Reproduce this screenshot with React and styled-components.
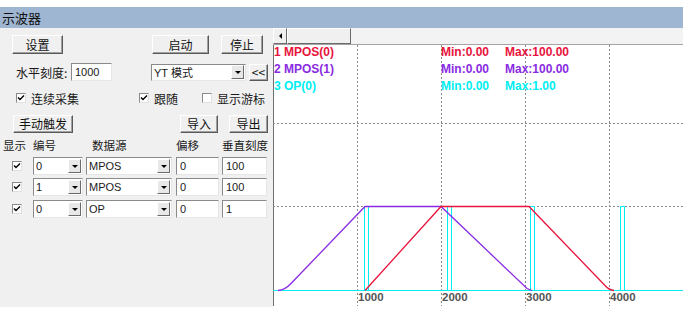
import React from 'react';
import styled, { createGlobalStyle } from 'styled-components';

const RED = '#e8143c';
const PURPLE = '#8a2be2';
const CYAN = '#00eef2';

const GlobalStyle = createGlobalStyle`
  html, body { margin: 0; padding: 0; background: #fff; }
  body {
    font-family: "Liberation Sans", "Noto Sans CJK SC", sans-serif;
    font-size: 12px;
    color: #000;
  }
`;

const Window = styled.div`
  width: 683px;
  padding-top: 7px;
`;

const TitleBar = styled.div`
  height: 21px;
  background: #9fb6d2;
  display: flex;
  align-items: center;
  padding-left: 2px;
  font-family: "Noto Sans CJK SC", sans-serif;
  font-size: 13px;
  color: #101010;
`;

const Body = styled.div`
  display: flex;
  height: 279px;
`;

const LeftPanel = styled.div`
  width: 273px;
  flex: none;
  background: #f0f0f0;
  display: flex;
  flex-direction: column;
  font-family: "Noto Sans CJK SC", sans-serif;
  font-size: 12px;
  color: #1a1a1a;
`;

const Row = styled.div`
  display: flex;
  align-items: center;
  height: ${p => p.$h}px;
  margin-top: ${p => p.$mt || 0}px;
`;

const Button = styled.div`
  box-sizing: border-box;
  width: ${p => p.$w}px;
  height: ${p => p.$h || 19}px;
  margin-left: ${p => p.$ml || 0}px;
  background: #f0f0f0;
  border: 1px solid;
  border-color: #fff #5a5a5a #5a5a5a #fff;
  box-shadow: inset -1px -1px #a0a0a0;
  display: flex;
  align-items: center;
  justify-content: center;
  font-size: 12px;
  line-height: 1;
  color: #111;
`;

const Label = styled.span`
  margin-left: ${p => p.$ml || 0}px;
  width: ${p => (p.$w ? `${p.$w}px` : 'auto')};
  white-space: nowrap;
`;

const TextBox = styled.div`
  box-sizing: border-box;
  width: ${p => p.$w}px;
  height: ${p => p.$h || 18}px;
  margin-left: ${p => p.$ml || 0}px;
  background: #fff;
  border: 1px solid;
  border-color: #8a8a8a #e6e6e6 #e6e6e6 #8a8a8a;
  display: flex;
  align-items: center;
  padding-left: 3px;
  font-family: "Liberation Sans", sans-serif;
  font-size: 11px;
`;

const ComboBox = styled(TextBox)`
  padding-left: 2px;
  justify-content: space-between;
  padding-right: 1px;
`;

const ComboText = styled.span`
  font-family: "Liberation Sans", "Noto Sans CJK SC", sans-serif;
  font-size: 11px;
`;

const ArrowButton = styled.div`
  box-sizing: border-box;
  width: 13px;
  height: 14px;
  background: #e8e8e8;
  border: 1px solid;
  border-color: #fff #6a6a6a #6a6a6a #fff;
  display: flex;
  align-items: center;
  justify-content: center;
  &::after {
    content: '';
    border-left: 3px solid transparent;
    border-right: 3px solid transparent;
    border-top: 3px solid #000;
    margin-top: 1px;
  }
`;

const CheckWrap = styled.div`
  display: flex;
  align-items: center;
  margin-left: ${p => p.$ml || 0}px;
  gap: 5px;
`;

const Box = styled.span`
  box-sizing: border-box;
  width: 10px;
  height: 10px;
  background: #fff;
  border: 1px solid;
  border-color: #8a8a8a #e0e0e0 #e0e0e0 #8a8a8a;
  display: flex;
  align-items: center;
  justify-content: center;
`;

const Check = ({ checked }) => (
  <Box>
    {checked && (
      <svg width="8" height="8" viewBox="0 0 8 8">
        <path d="M1 3.5 L3 5.5 L7 1.5" stroke="#000" strokeWidth="1.4" fill="none" />
      </svg>
    )}
  </Box>
);

const CheckBox = ({ checked, label, ml }) => (
  <CheckWrap $ml={ml}>
    <Check checked={checked} />
    {label && <span>{label}</span>}
  </CheckWrap>
);

const Combo = ({ value, w, ml, h }) => (
  <ComboBox $w={w} $ml={ml} $h={h}>
    <ComboText>{value}</ComboText>
    <ArrowButton />
  </ComboBox>
);

const Grid = styled.div`
  display: grid;
  grid-template-columns: 30px 53px 90px 46px 50px;
  grid-auto-rows: ${p => p.$row}px;
  align-items: center;
  margin-left: 3px;
  margin-top: ${p => p.$mt || 0}px;
`;

const HeadCell = styled.span`
  padding-left: ${p => p.$pl || 0}px;
  font-size: 11.5px;
`;

const Cell = styled.div`
  display: flex;
  align-items: center;
  padding-left: ${p => p.$pl || 0}px;
`;

const RightPane = styled.div`
  flex: 1;
  display: flex;
  flex-direction: column;
`;

const ScrollBar = styled.div`
  height: 17px;
  box-sizing: border-box;
  border-bottom: 1px solid #a4a4a4;
  background: #f3f3f3;
  display: flex;
`;

const ScrollArrow = styled.div`
  box-sizing: border-box;
  width: 14px;
  height: 16px;
  background: #f0f0f0;
  border: 1px solid;
  border-color: #fff #6a6a6a #6a6a6a #fff;
  display: flex;
  align-items: center;
  justify-content: center;
  &::after {
    content: '';
    border-top: 3px solid transparent;
    border-bottom: 3px solid transparent;
    border-right: 3px solid #000;
  }
`;

const ScrollThumb = styled.div`
  box-sizing: border-box;
  width: 64px;
  height: 16px;
  background: #f0f0f0;
  border: 1px solid;
  border-color: #fff #6a6a6a #6a6a6a #fff;
`;

const ChartSvg = styled.svg`
  display: block;
  font-family: "Liberation Sans", sans-serif;
  font-weight: bold;
  font-size: 12px;
`;

const gridX = [84.5, 168.5, 252.5, 336.5];
const gridY = [78.5, 161.5];
const pulses = [[91.5, 95.5], [174.5, 178.5], [257.5, 261.5], [347.5, 351.5]];

const legend = [
  { name: '1 MPOS(0)', min: 'Min:0.00', max: 'Max:100.00', color: RED },
  { name: '2 MPOS(1)', min: 'Min:0.00', max: 'Max:100.00', color: PURPLE },
  { name: '3 OP(0)', min: 'Min:0.00', max: 'Max:1.00', color: CYAN },
];

const Chart = () => (
  <ChartSvg width="410" height="261" viewBox="0 0 410 261">
    <rect x="0" y="0" width="410" height="261" fill="#fff" />
    <line x1="0.5" y1="0" x2="0.5" y2="261" stroke="#707070" />
    {gridX.map(x => (
      <line key={x} x1={x} y1="0" x2={x} y2="261" stroke="#8a8a8a" strokeDasharray="2 2" />
    ))}
    {gridY.map(y => (
      <line key={y} x1="0" y1={y} x2="410" y2={y} stroke="#8a8a8a" strokeDasharray="2 2" />
    ))}
    {legend.map((l, i) => (
      <g key={l.name} fill={l.color}>
        <text x="1" y={11 + i * 17}>{l.name}</text>
        <text x="168" y={11 + i * 17}>{l.min}</text>
        <text x="232" y={11 + i * 17}>{l.max}</text>
      </g>
    ))}
    <line x1="0" y1="245.5" x2="410" y2="245.5" stroke={CYAN} />
    {pulses.map(([a, b]) => (
      <path key={a} d={`M${a} 245.5 V161.5 H${b} V245.5`} stroke={CYAN} fill="none" />
    ))}
    <path
      d="M5 245.5 Q12 245 18 238.5 L92 161.5 L168 161.5 L254 243.5 L259 245.5"
      stroke={PURPLE}
      strokeWidth="1.3"
      fill="none"
    />
    <path
      d="M92 245.5 L168 161.5 L256 161.5 L332 240.5 Q336 245 341 245.5"
      stroke={RED}
      strokeWidth="1.3"
      fill="none"
    />
    {['1000', '2000', '3000', '4000'].map((t, i) => (
      <text key={t} x={85 + i * 84} y="256" fill="#555" fontSize="11.5">{t}</text>
    ))}
  </ChartSvg>
);

export default function App() {
  return (
    <Window>
      <GlobalStyle />
      <TitleBar>示波器</TitleBar>
      <Body>
        <LeftPanel>
          <Row $h={19} $mt={7}>
            <Button $w={51} $ml={12}>设置</Button>
            <Button $w={57} $ml={89}>启动</Button>
            <Button $w={42} $ml={12}>停止</Button>
          </Row>
          <Row $h={20} $mt={8}>
            <Label $ml={16} $w={55}>水平刻度:</Label>
            <TextBox $w={41}>1000</TextBox>
            <Combo value="YT 模式" w={95} ml={39} h={17} />
            <Button $w={19} $h={17} $ml={3}>&lt;&lt;</Button>
          </Row>
          <Row $h={16} $mt={8}>
            <CheckBox checked label="连续采集" ml={16} />
            <CheckBox checked label="跟随" ml={60} />
            <CheckBox label="显示游标" ml={24} />
          </Row>
          <Row $h={18} $mt={9}>
            <Button $w={60} $h={18} $ml={13}>手动触发</Button>
            <Button $w={38} $h={18} $ml={107}>导入</Button>
            <Button $w={39} $h={18} $ml={11}>导出</Button>
          </Row>
          <Grid $row={14} $mt={5}>
            <HeadCell>显示</HeadCell>
            <HeadCell>编号</HeadCell>
            <HeadCell $pl={6}>数据源</HeadCell>
            <HeadCell>偏移</HeadCell>
            <HeadCell>垂直刻度</HeadCell>
          </Grid>
          <Grid $row={21.5} $mt={3}>
            {[
              ['0', 'MPOS', '0', '100'],
              ['1', 'MPOS', '0', '100'],
              ['0', 'OP', '0', '1'],
            ].map((r, i) => (
              <React.Fragment key={i}>
                <Cell $pl={9}><Check checked /></Cell>
                <Cell><Combo value={r[0]} w={50} /></Cell>
                <Cell><Combo value={r[1]} w={86} /></Cell>
                <Cell><TextBox $w={43}>{r[2]}</TextBox></Cell>
                <Cell><TextBox $w={45}>{r[3]}</TextBox></Cell>
              </React.Fragment>
            ))}
          </Grid>
        </LeftPanel>
        <RightPane>
          <ScrollBar>
            <ScrollArrow />
            <ScrollThumb />
          </ScrollBar>
          <Chart />
        </RightPane>
      </Body>
    </Window>
  );
}
